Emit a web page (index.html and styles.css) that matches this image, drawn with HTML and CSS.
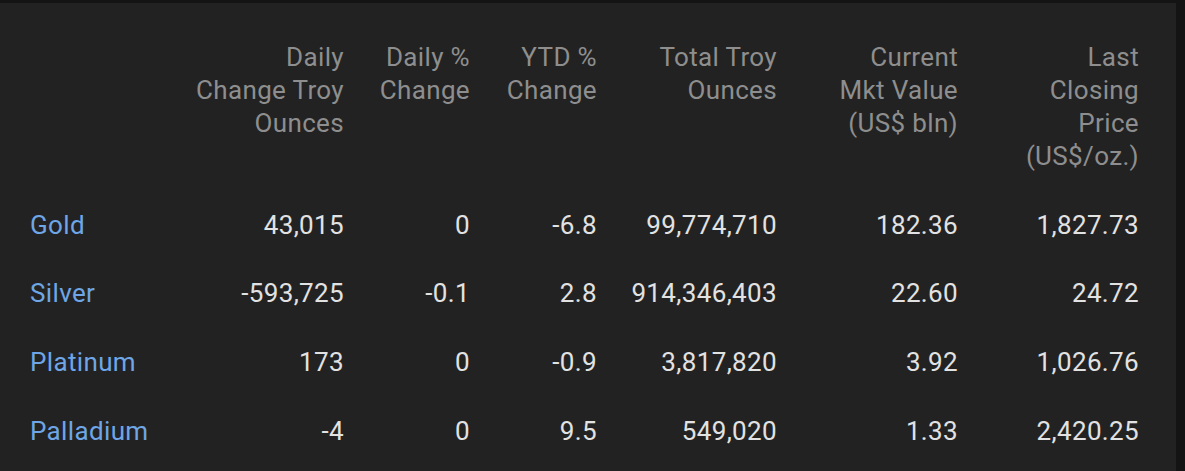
FILE: index.html
```html
<!DOCTYPE html>
<html lang="en">
<head>
<meta charset="utf-8">
<title>Precious Metals Holdings</title>
<link rel="stylesheet" href="styles.css">
</head>
<body>
<div class="panel">
  <div class="grid">
    <div class="hd name"></div>
    <div class="hd">Daily<br>Change Troy<br>Ounces</div>
    <div class="hd">Daily %<br>Change</div>
    <div class="hd">YTD %<br>Change</div>
    <div class="hd">Total Troy<br>Ounces</div>
    <div class="hd">Current<br>Mkt Value<br>(US$ bln)</div>
    <div class="hd">Last<br>Closing<br>Price<br>(US$/oz.)</div>

    <div class="cell name">Gold</div>
    <div class="cell">43,015</div>
    <div class="cell">0</div>
    <div class="cell">-6.8</div>
    <div class="cell">99,774,710</div>
    <div class="cell">182.36</div>
    <div class="cell">1,827.73</div>

    <div class="cell name">Silver</div>
    <div class="cell">-593,725</div>
    <div class="cell">-0.1</div>
    <div class="cell">2.8</div>
    <div class="cell">914,346,403</div>
    <div class="cell">22.60</div>
    <div class="cell">24.72</div>

    <div class="cell name">Platinum</div>
    <div class="cell">173</div>
    <div class="cell">0</div>
    <div class="cell">-0.9</div>
    <div class="cell">3,817,820</div>
    <div class="cell">3.92</div>
    <div class="cell">1,026.76</div>

    <div class="cell name">Palladium</div>
    <div class="cell">-4</div>
    <div class="cell">0</div>
    <div class="cell">9.5</div>
    <div class="cell">549,020</div>
    <div class="cell">1.33</div>
    <div class="cell">2,420.25</div>
  </div>
</div>
</body>
</html>
```
FILE: styles.css
```css
html, body {
  margin: 0;
  padding: 0;
  background: #141414;
  height: 100%;
  overflow: hidden;
}
body {
  padding: 3px 9px 0 0;
  box-sizing: border-box;
  font-family: Roboto, "Liberation Sans", sans-serif;
}
.panel {
  background: #222222;
  height: 100%;
  padding: 38px 37px 0 30px;
  box-sizing: border-box;
}
.grid {
  display: grid;
  grid-template-columns: 160px 154px 126px 127px 180px 181px 181px;
  font-size: 26px;
  line-height: 33px;
  letter-spacing: 0.35px;
}
.hd {
  color: #8e8e8e;
  text-align: right;
  padding-bottom: 18px;
}
.cell {
  color: #e2e2e2;
  text-align: right;
  padding: 17.8px 0 17.8px;
}
.name {
  text-align: left;
  color: #6ea6e6;
}
```
